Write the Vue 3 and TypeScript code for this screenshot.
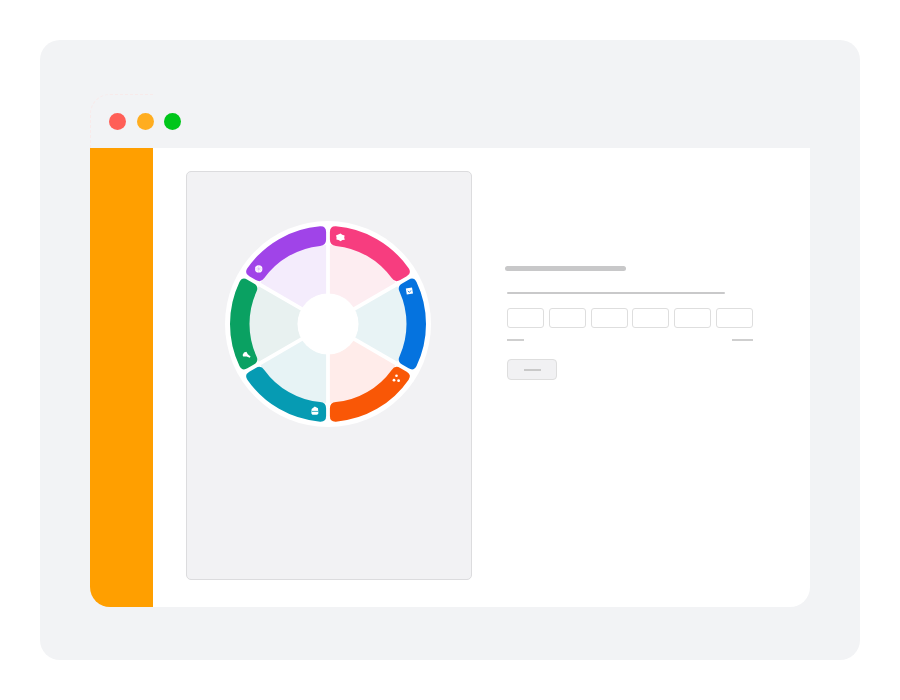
<script setup lang="ts">
// wheel geometry, px inside a 210x210 svg
const CX = 105
const CY = 105
const GAP = 1.9

const pt = (r: number, deg: number) => {
  const a = ((deg - 90) * Math.PI) / 180
  return `${(CX + r * Math.cos(a)).toFixed(2)} ${(CY + r * Math.sin(a)).toFixed(2)}`
}

const off = (r: number) => (Math.asin(GAP / r) * 180) / Math.PI

// ring sector with rounded corners (c = corner radius)
const sector = (a0: number, a1: number, rIn: number, rOut: number, c: number) => {
  const ca = (r: number) => off(r) + (c / r) * (180 / Math.PI)
  if (c === 0) {
    return [
      `M${pt(rOut, a0 + off(rOut))}`,
      `A${rOut} ${rOut} 0 0 1 ${pt(rOut, a1 - off(rOut))}`,
      `L${pt(rIn, a1 - off(rIn))}`,
      `A${rIn} ${rIn} 0 0 0 ${pt(rIn, a0 + off(rIn))}Z`,
    ].join(' ')
  }
  return [
    `M${pt(rOut, a0 + ca(rOut))}`,
    `A${rOut} ${rOut} 0 0 1 ${pt(rOut, a1 - ca(rOut))}`,
    `Q${pt(rOut, a1 - off(rOut))} ${pt(rOut - c, a1 - off(rOut - c))}`,
    `L${pt(rIn + c, a1 - off(rIn + c))}`,
    `Q${pt(rIn, a1 - off(rIn))} ${pt(rIn, a1 - ca(rIn))}`,
    `A${rIn} ${rIn} 0 0 0 ${pt(rIn, a0 + ca(rIn))}`,
    `Q${pt(rIn, a0 + off(rIn))} ${pt(rIn + c, a0 + off(rIn + c))}`,
    `L${pt(rOut - c, a0 + off(rOut - c))}`,
    `Q${pt(rOut, a0 + off(rOut))} ${pt(rOut, a0 + ca(rOut))}Z`,
  ].join(' ')
}

const slices = [
  { name: 'pink', color: '#f73d7f', tint: '#fdedf1' },
  { name: 'blue', color: '#0573df', tint: '#e8f3f5' },
  { name: 'orange', color: '#f95706', tint: '#ffecea' },
  { name: 'teal', color: '#069bb3', tint: '#e7f3f5' },
  { name: 'green', color: '#0aa162', tint: '#e8f1f0' },
  { name: 'purple', color: '#a044e8', tint: '#f4ecfc' },
].map((s, i) => ({
  ...s,
  band: sector(i * 60, i * 60 + 60, 78.5, 98, 6),
  wedge: sector(i * 60, i * 60 + 60, 30, 79, 0),
}))

const boxes = [1, 2, 3, 4, 5, 6]
</script>

<template>
  <div class="backdrop">
    <div class="window">
      <div class="titlebar">
        <span class="dot red"></span>
        <span class="dot amber"></span>
        <span class="dot green"></span>
      </div>
      <div class="body">
        <aside class="sidebar"></aside>
        <main class="main">
          <section class="card">
            <svg class="wheel" width="210" height="210" viewBox="0 0 210 210">
              <circle cx="105" cy="105" r="103" fill="#fff" />
              <path v-for="s in slices" :key="s.name + '-w'" :d="s.wedge" :fill="s.tint" />
              <path v-for="s in slices" :key="s.name" :d="s.band" :fill="s.color" />
              <circle cx="105" cy="105" r="30.5" fill="#fff" />

              <!-- tiny glyphs on the bands -->
              <g fill="#fff">
                <!-- pink: blob -->
                <path d="M117.6 14.4l1.6 1.4 2.4.6-.4 2.4.6 2-2.4.2-1.8 1.2-2-1.2-2.2-.4.2-2.2-.6-2 2.2-.8z" />
                <!-- blue: square -->
                <path d="M182.8 69.4l6.2-1 1 6-6.2 1.2z" />
                <!-- orange: three nodes -->
                <circle cx="173.5" cy="156.8" r="1.3" />
                <circle cx="171" cy="161.2" r="1.4" />
                <circle cx="175.6" cy="161.7" r="1.4" />
                <!-- teal: bag -->
                <path d="M88.6 190l3.2-2.6 3.2 1.8.4 5.2-1.2 1.4h-4.8l-1-1.4z" />
                <!-- green: wrench -->
                <path d="M21 133.6l2.4-.8 1.4 2.4 2.8 2.2-.8 1.4-3.2-1.4-3.4.2-.6-1.6z" />
                <!-- purple: ball -->
                <circle cx="35.7" cy="49.9" r="3.7" />
              </g>
              <path d="M184.8 71.8l1.6 1.6 1.6-2" stroke="#0573df" stroke-width=".8" fill="none" />
              <path d="M89 192.4h6" stroke="#069bb3" stroke-width=".8" fill="none" />
              <path d="M35.7 46.2v7.4M32 49.9h7.4M33.2 47.4l5 5M38.2 47.4l-5 5" stroke="#d3abf4" stroke-width=".5" fill="none" />
            </svg>
          </section>
          <section class="panel">
            <div class="heading"></div>
            <div class="rule"></div>
            <div class="boxes">
              <div v-for="b in boxes" :key="b" class="box"></div>
            </div>
            <div class="hints">
              <span class="hint short"></span>
              <span class="hint long"></span>
            </div>
            <div class="btn"><span></span></div>
          </section>
        </main>
      </div>
    </div>
  </div>
</template>

<style>
html,
body {
  background: #fff;
}
</style>

<style scoped>
.backdrop {
  width: 820px;
  height: 620px;
  margin: 40px;
  padding: 54px 50px;
  box-sizing: border-box;
  background: #f2f3f5;
  border-radius: 20px;
  font-family: "Liberation Sans", sans-serif;
}

.window {
  display: flex;
  flex-direction: column;
  height: 513px;
}

.titlebar {
  position: relative;
  display: flex;
  align-items: center;
  height: 54px;
  padding-left: 19px;
  gap: 10.5px;
  box-sizing: border-box;
}

/* faint dashed edge round the sidebar's end of the title bar */
.titlebar::before {
  content: "";
  position: absolute;
  left: 0;
  top: 0;
  width: 63px;
  height: 54px;
  box-sizing: border-box;
  border: 1px dashed #f8eaea;
  border-right: 0;
  border-bottom: 0;
  border-top-left-radius: 20px;
}

.dot {
  width: 17px;
  height: 17px;
  border-radius: 50%;
}

.red {
  background: #ff5f57;
}

.amber {
  background: #ffad1f;
}

.green {
  background: #00c61a;
}

.body {
  flex: 1;
  display: flex;
  min-height: 0;
}

.sidebar {
  width: 63px;
  background: #ff9f00;
  border-bottom-left-radius: 20px;
}

.main {
  flex: 1;
  display: flex;
  padding: 23px 0 26px 33px;
  background: #fff;
  border-bottom-right-radius: 20px;
}

.card {
  width: 286px;
  height: 409px;
  box-sizing: border-box;
  padding: 47px 0 0 36px;
  background: #f2f2f4;
  border: 1px solid #dcdcde;
  border-radius: 5px;
}

.wheel {
  display: block;
}

.panel {
  display: flex;
  flex-direction: column;
  width: 248px;
  margin-left: 33px;
  padding-top: 95px;
}

.heading {
  width: 121px;
  height: 5px;
  background: #c8c8c9;
  border-radius: 3px;
}

.rule {
  width: 218px;
  height: 2px;
  margin: 21px 0 0 2px;
  background: #c9c9ca;
  border-radius: 1px;
}

.boxes {
  display: flex;
  gap: 4.8px;
  margin: 14px 0 0 2px;
}

.box {
  width: 37px;
  height: 20px;
  box-sizing: border-box;
  border: 1px solid #dedede;
  border-radius: 3px;
  background: #fff;
}

.hints {
  display: flex;
  justify-content: space-between;
  width: 246px;
  margin: 11px 0 0 2px;
}

.hint {
  height: 2px;
  background: #cfcfcf;
}

.short {
  width: 17px;
}

.long {
  width: 21px;
}

.btn {
  display: flex;
  align-items: center;
  justify-content: center;
  width: 50px;
  height: 21px;
  margin: 18px 0 0 2px;
  box-sizing: border-box;
  background: #f1f1f3;
  border: 1px solid #dedede;
  border-radius: 4px;
}

.btn span {
  width: 17px;
  height: 2px;
  background: #c9c9c9;
}
</style>
